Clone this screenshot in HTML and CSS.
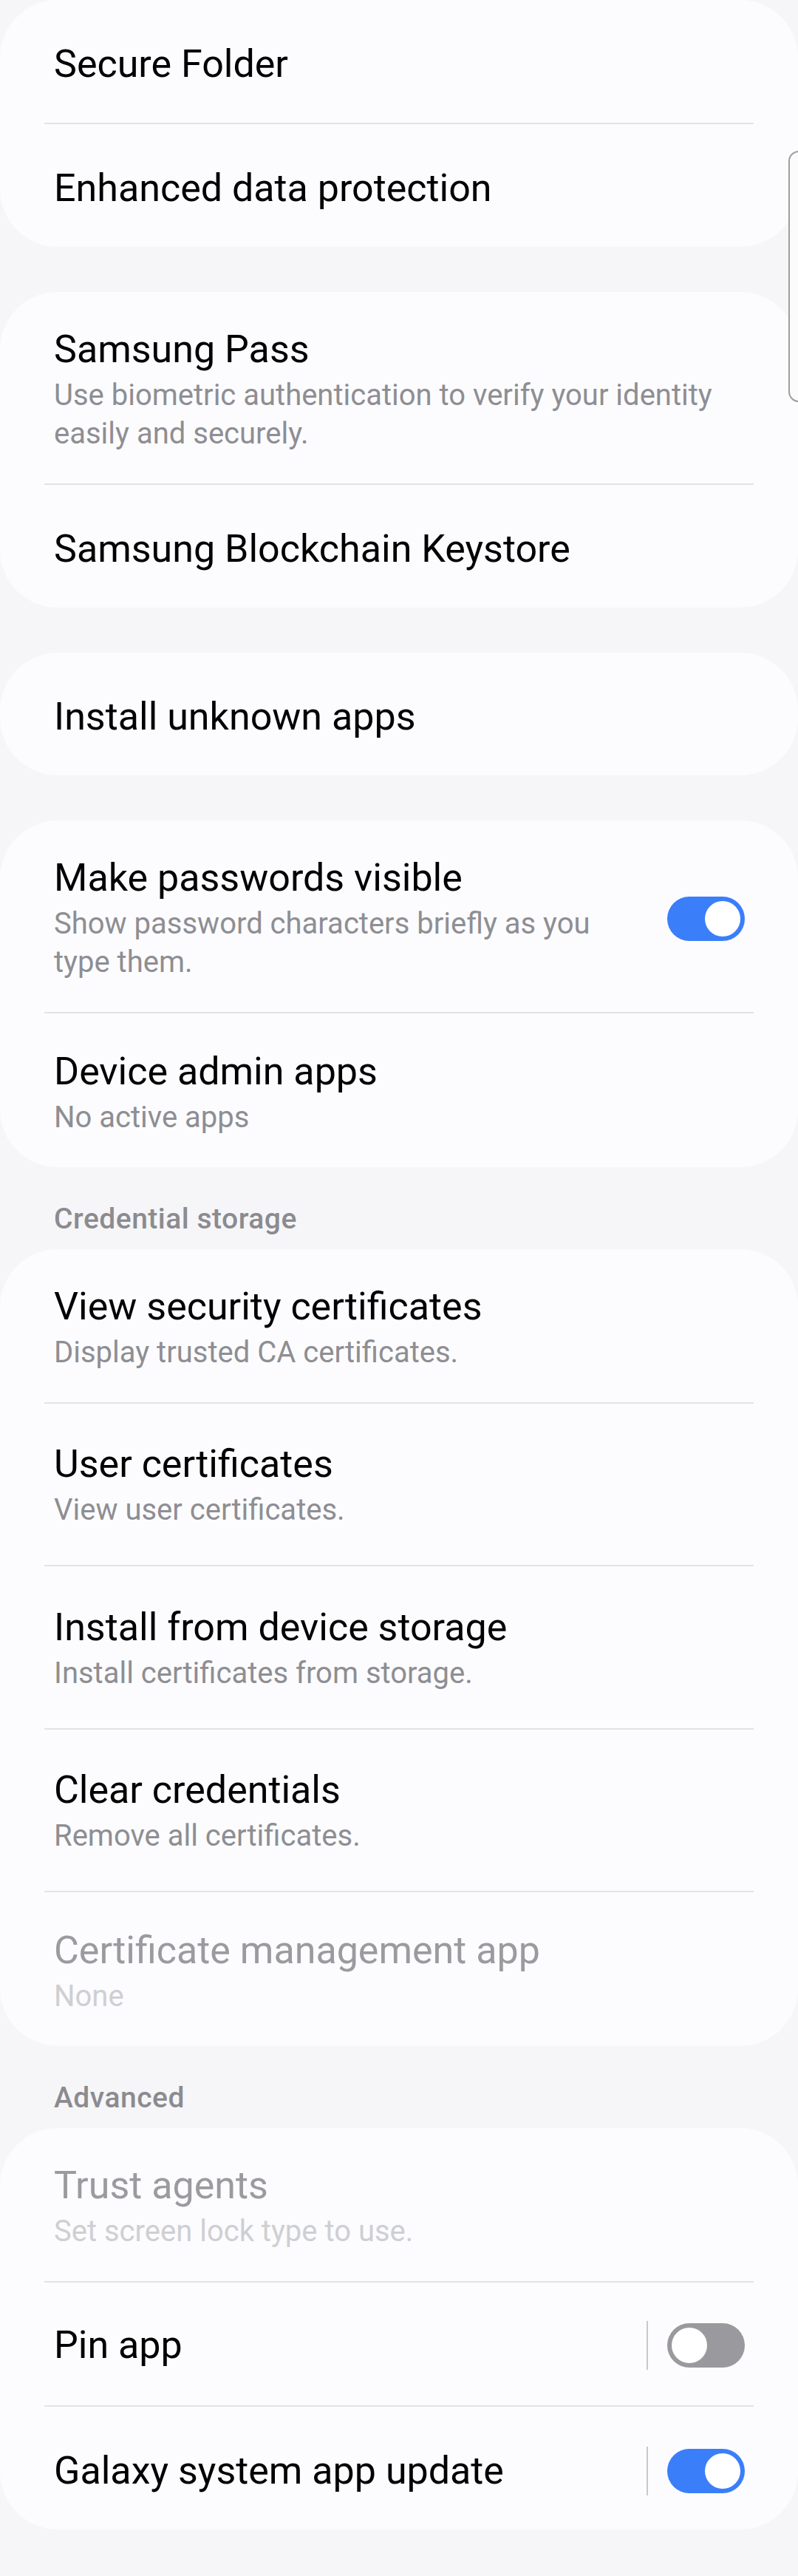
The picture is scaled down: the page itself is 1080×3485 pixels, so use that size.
FILE: index.html
```html
<!DOCTYPE html>
<html lang="en">
<head>
<meta charset="utf-8">
<title>Security settings</title>
<link rel="stylesheet" href="styles.css">
</head>
<body>
<div class="page">
  <section class="card">
    <div class="row"><div class="text"><div class="title">Secure Folder</div></div></div>
    <div class="divider"></div>
    <div class="row"><div class="text"><div class="title">Enhanced data protection</div></div></div>
  </section>

  <section class="card">
    <div class="row"><div class="text"><div class="title">Samsung Pass</div><div class="sub">Use biometric authentication to verify your identity easily and securely.</div></div></div>
    <div class="divider"></div>
    <div class="row"><div class="text"><div class="title">Samsung Blockchain Keystore</div></div></div>
  </section>

  <section class="card">
    <div class="row"><div class="text"><div class="title">Install unknown apps</div></div></div>
  </section>

  <section class="card">
    <div class="row">
      <div class="text narrow"><div class="title">Make passwords visible</div><div class="sub">Show password characters briefly as you type them.</div></div>
      <div class="toggle on"></div>
    </div>
    <div class="divider"></div>
    <div class="row"><div class="text"><div class="title">Device admin apps</div><div class="sub">No active apps</div></div></div>
  </section>

  <div class="section-header">Credential storage</div>

  <section class="card">
    <div class="row"><div class="text"><div class="title">View security certificates</div><div class="sub">Display trusted CA certificates.</div></div></div>
    <div class="divider"></div>
    <div class="row"><div class="text"><div class="title">User certificates</div><div class="sub">View user certificates.</div></div></div>
    <div class="divider"></div>
    <div class="row"><div class="text"><div class="title">Install from device storage</div><div class="sub">Install certificates from storage.</div></div></div>
    <div class="divider"></div>
    <div class="row"><div class="text"><div class="title">Clear credentials</div><div class="sub">Remove all certificates.</div></div></div>
    <div class="divider"></div>
    <div class="row disabled"><div class="text"><div class="title">Certificate management app</div><div class="sub">None</div></div></div>
  </section>

  <div class="section-header">Advanced</div>

  <section class="card">
    <div class="row disabled"><div class="text"><div class="title">Trust agents</div><div class="sub">Set screen lock type to use.</div></div></div>
    <div class="divider"></div>
    <div class="row">
      <div class="text"><div class="title">Pin app</div></div>
      <div class="vline"></div>
      <div class="toggle off"></div>
    </div>
    <div class="divider"></div>
    <div class="row">
      <div class="text"><div class="title">Galaxy system app update</div></div>
      <div class="vline"></div>
      <div class="toggle on"></div>
    </div>
  </section>

  <div class="scrollbar"></div>
</div>
</body>
</html>
```

FILE: styles.css
```css
* {
  box-sizing: border-box;
}

html, body {
  margin: 0;
  padding: 0;
}

body {
  background: #f6f6f8;
  font-family: Roboto, "Noto Sans", "Liberation Sans", sans-serif;
  color: #000;
}

.page {
  position: relative;
  display: flex;
  flex-direction: column;
  min-height: 3485px;
  overflow: hidden;
}

.card {
  background: #fcfcfe;
  border-radius: 78px;
  display: flex;
  flex-direction: column;
}

.card + .card {
  margin-top: 61px;
}

.section-header {
  padding: 48px 73px 18px;
  font-size: 39px;
  line-height: 45px;
  font-weight: 500;
  letter-spacing: 0.5px;
  color: #8b8b90;
}

.row {
  display: flex;
  align-items: center;
  min-height: 166px;
  padding: 48.2px 72px 41px 73px;
}

.row:not(:first-child):not(:last-child) {
  padding-top: 52.2px;
  padding-bottom: 48.4px;
}

.text {
  flex: 1;
  min-width: 0;
  display: flex;
  flex-direction: column;
}

.text.narrow {
  margin-right: 40px;
}

.title {
  font-size: 52px;
  line-height: 60px;
  color: #000;
}

.sub {
  margin-top: 6px;
  font-size: 40px;
  line-height: 52px;
  color: #8e8e93;
}

.disabled .title {
  color: #9b9b9f;
}

.disabled .sub {
  color: #cfcfd2;
}

.divider {
  height: 2px;
  margin: 0 60px;
  background: #e3e3e5;
  flex: none;
}

.vline {
  flex: none;
  width: 2px;
  height: 66px;
  background: #c8c8ca;
  margin-right: 26px;
}

.toggle {
  flex: none;
  position: relative;
  width: 105px;
  height: 60px;
  border-radius: 30px;
  background: #3a7ef9;
}

.toggle::after {
  content: "";
  position: absolute;
  top: 6px;
  right: 6px;
  width: 48px;
  height: 48px;
  border-radius: 50%;
  background: #ffffff;
}

.toggle.off {
  background: #9a999e;
}

.toggle.off::after {
  right: auto;
  left: 6px;
}

.scrollbar {
  position: absolute;
  left: 1067px;
  top: 204px;
  width: 30px;
  height: 340px;
  border: 2px solid #9e9e9e;
  border-radius: 14px;
  background: #fbfbfb;
}
```
